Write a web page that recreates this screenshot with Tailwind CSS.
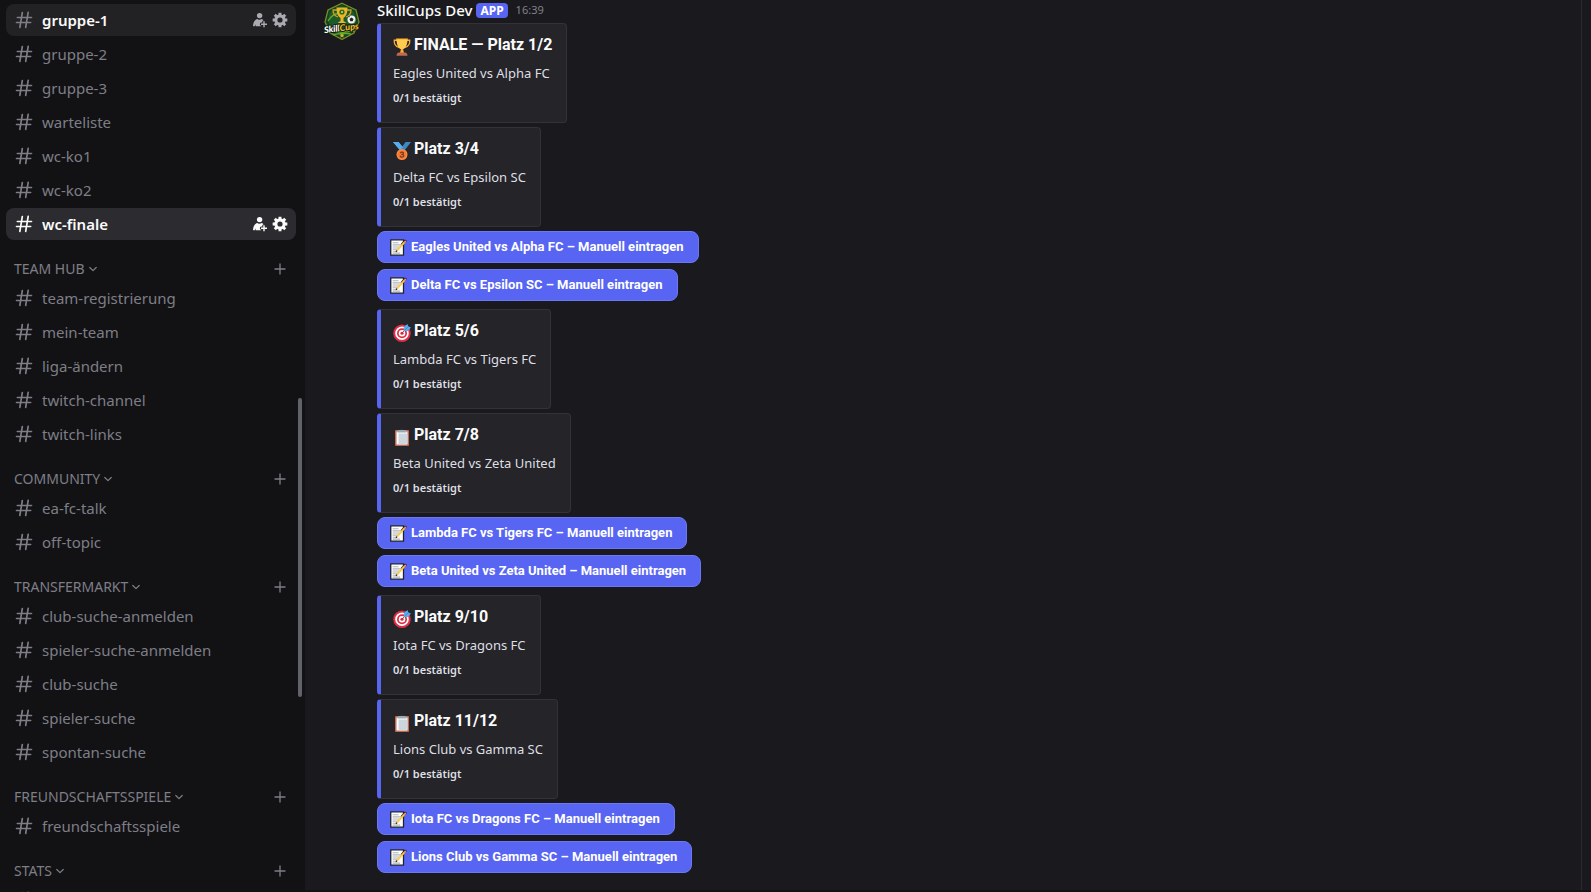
<!DOCTYPE html>
<html lang="de">
<head>
<meta charset="utf-8">
<meta name="viewport" content="width=device-width, initial-scale=1">
<title>wc-finale</title>
<script src="https://cdn.jsdelivr.net/npm/@tailwindcss/browser@4"></script>
</head>
<body class="h-screen overflow-hidden bg-[#1a1a1e] font-['Noto_Sans','Open_Sans',sans-serif] text-[#dfdfe3]">

<!-- Icon definitions -->
<svg class="hidden" aria-hidden="true">
  <symbol id="hash" viewBox="0 0 24 24"><path fill="currentColor" fill-rule="evenodd" d="M10.99 3.16A1 1 0 1 0 9 2.84L8.15 8H4a1 1 0 0 0 0 2h3.82l-.67 4H3a1 1 0 1 0 0 2h3.82l-.8 4.84a1 1 0 0 0 1.97.32L8.85 16h4.97l-.8 4.84a1 1 0 0 0 1.97.32l.86-5.16H20a1 1 0 1 0 0-2h-3.82l.67-4H21a1 1 0 1 0 0-2h-3.82l.8-4.84a1 1 0 1 0-1.97-.32L15.15 8h-4.97l.8-4.84ZM14.15 14l.67-4H9.85l-.67 4h4.97Z"/></symbol>
  <symbol id="invite" viewBox="0 0 16 16"><g fill="currentColor"><circle cx="7.6" cy="3.6" r="2.7"/><path d="M1 14.2c0-3.600 1.700-6.900 4.500-7.300.5 1 3.200 1 4.100 0 .9.200 1.500.600 2 1.300-.9.200-1.300.800-1.300 1.800v.5h-.5c-1.300 0-1.900.700-1.900 1.700 0 .9.500 1.400 1.300 1.600v.4H3.700l-.3-2-.6 2H1.600a.6.6 0 0 1-.6-.6Z"/><path d="M11.300 9.200h1.400v2.300H15v1.400h-2.300v2.300h-1.400v-2.300H9v-1.400h2.300z"/></g></symbol>
  <symbol id="gear" viewBox="0 0 24 24"><g fill="none" stroke="currentColor"><circle cx="12" cy="12" r="6.200" stroke-width="4.600"/><path stroke-width="4.400" stroke-linecap="butt" d="M12 5V1M12 19v4M5 12H1M19 12h4M7 7 4.200 4.200M17 17l2.800 2.800M17 7l2.800-2.800M7 17l-2.800 2.800"/></g></symbol>
  <symbol id="chevron" viewBox="0 0 12 12"><path fill="none" stroke="currentColor" stroke-width="1.200" stroke-linecap="round" stroke-linejoin="round" d="m2.800 4.500 3.200 3.200 3.200-3.200"/></symbol>
  <symbol id="plus" viewBox="0 0 18 18"><path fill="none" stroke="currentColor" stroke-width="1.300" stroke-linecap="round" d="M9 4v10M4 9h10"/></symbol>

  <symbol id="trophy" viewBox="0 0 36 36"><path fill="none" stroke="#FFAC33" stroke-width="2.600" d="M8 4.500H2.500C2 12 5 17 12 19M28 4.500h5.500C34 12 31 17 24 19"/><path fill="#FFCC4D" d="M7 2h22c0 11-3 18-9 20.500V27h-4v-4.500C10 20 7 13 7 2Z"/><path fill="#FFAC33" d="M16 22h4l2 8h-8z"/><path fill="#C1694F" d="M12 29h12c3 0 5 3 5 6.500H7C7 32 9 29 12 29Z"/><path fill="#FFAC33" d="M6 1h24v2H6z"/></symbol>
  <symbol id="medal" viewBox="0 0 36 36"><path fill="#55ACEE" d="M0 0h11l11 13-7 5z"/><path fill="#3B88C3" d="M25 0h11L23 17l-8-3z"/><path fill="#55ACEE" d="M0 0h11l9 11-6 5z"/><circle cx="18" cy="25" r="11" fill="#FF8A3B"/><circle cx="18" cy="25" r="8.500" fill="#F4783A"/><path fill="none" stroke="#7C3B1B" stroke-width="2.400" stroke-linecap="round" stroke-linejoin="round" d="M15 21.500c1-2 6-2 6 .7 0 2-2 2.500-3.500 2.500 2 0 4 .8 4 3 0 3-5.500 3.200-7 .5"/></symbol>
  <symbol id="target" viewBox="0 0 36 36"><circle cx="18" cy="18.500" r="17.500" fill="#DD2E44"/><circle cx="18" cy="18.500" r="13.500" fill="#fff"/><circle cx="18" cy="18.500" r="10" fill="#DD2E44"/><circle cx="18" cy="18.500" r="6.500" fill="#fff"/><circle cx="18" cy="18.500" r="3.200" fill="#DD2E44"/><path stroke="#8a3342" stroke-width="1.800" d="m18 18.500 9-10"/><path fill="#55ACEE" d="m22 14-.5-8L29 0l1.500 5L36 7l-6 7z"/><path stroke="#3B88C3" stroke-width="1.500" d="m23 13 9-9"/></symbol>
  <symbol id="clipboard" viewBox="0 0 36 36"><rect x="4" y="4" width="28" height="32" rx="2" fill="#C1694F"/><path fill="#fff" d="M7 7h22v26H7z"/><path fill="#CCD6DD" d="M11 11h18v18l-4 4H11z"/><path fill="#292F33" d="M14 3C15-.6 21-.6 22 3l1 2H13z"/><path fill="#99AAB5" d="M11 4h14c1.500 1 2 3 2 5H9c0-2 .5-4 2-5Z"/></symbol>
  <symbol id="memo" viewBox="0 0 16 16"><path fill="#fdfdfd" stroke="#20222b" stroke-width="1.200" d="M.7.8h12v14.400H.7z"/><path stroke="#b1b4bc" stroke-width="1" d="M2.500 3.500H8M2.500 5.500h8M2.500 7.500h6.500M2.500 9.500h5M2.500 11.500h4M2.500 13.300h7"/><path stroke="#20222b" stroke-width="2.200" stroke-linecap="round" d="m11.500 4.800 3-3"/><path stroke="#ffc847" stroke-width="1.700" d="m6.300 11.200 7.500-8.200"/><path stroke="#f08a6b" stroke-width="1.600" stroke-linecap="round" d="m13.900 2.900.5-.6"/><path stroke="#20222b" stroke-width="1.200" d="m5.600 12 .9-1"/></symbol>
</svg>

<div class="flex h-full">

  <aside class="flex w-[305px] shrink-0 justify-between overflow-hidden bg-[#121214] text-[#7e7e87]">
    <nav aria-label="Kanäle" class="flex w-[296px] flex-col pt-1 pl-[6px] text-[15px] leading-5 [&_li>a]:flex [&_li>a]:h-8 [&_li>a]:min-w-0 [&_li>a]:flex-1 [&_li>a]:items-center [&_li>a]:gap-2 [&_li>a]:pl-2 [&_li>a>svg]:size-5 [&_ul]:flex [&_ul]:flex-col [&_ul]:gap-[2px] [&_h2]:flex [&_h2]:h-6 [&_h2]:items-center [&_h2]:justify-between [&_h2]:pr-[7px] [&_h2]:pl-2 [&_h2]:text-sm [&_section]:flex [&_section]:flex-col [&_section]:gap-[1px] [&_section]:pt-[17px] [&_h2>button:first-child]:flex [&_h2>button:first-child]:items-center [&_h2>button:first-child]:gap-[2px] [&_h2_svg]:size-3 [&_h2>button:last-child>svg]:size-[18px]">
      <ul>
        <li class="flex items-center rounded-lg bg-[#222225] pr-2">
          <a href="#gruppe-1"><svg><use href="#hash"/></svg><span class="font-semibold text-[#fbfbfb]">gruppe-1</span></a>
          <span class="flex gap-1 text-[#aaaab1]">
            <button aria-label="Einladen"><svg class="size-4"><use href="#invite"/></svg></button>
            <button aria-label="Kanal bearbeiten"><svg class="size-4"><use href="#gear"/></svg></button>
          </span>
        </li>
        <li class="flex"><a href="#gruppe-2"><svg><use href="#hash"/></svg>gruppe-2</a></li>
        <li class="flex"><a href="#gruppe-3"><svg><use href="#hash"/></svg>gruppe-3</a></li>
        <li class="flex"><a href="#warteliste"><svg><use href="#hash"/></svg>warteliste</a></li>
        <li class="flex"><a href="#wc-ko1"><svg><use href="#hash"/></svg>wc-ko1</a></li>
        <li class="flex"><a href="#wc-ko2"><svg><use href="#hash"/></svg>wc-ko2</a></li>
        <li class="flex items-center rounded-lg bg-[#2c2c30] pr-2 text-[#fbfbfb]">
          <a href="#wc-finale" aria-current="page"><svg><use href="#hash"/></svg><span class="font-semibold">wc-finale</span></a>
          <span class="flex gap-1">
            <button aria-label="Einladen"><svg class="size-4"><use href="#invite"/></svg></button>
            <button aria-label="Kanal bearbeiten"><svg class="size-4"><use href="#gear"/></svg></button>
          </span>
        </li>
      </ul>

      <section>
        <h2><button>TEAM HUB<svg><use href="#chevron"/></svg></button><button aria-label="Kanal erstellen"><svg><use href="#plus"/></svg></button></h2>
        <ul>
          <li class="flex"><a href="#team-registrierung"><svg><use href="#hash"/></svg>team-registrierung</a></li>
          <li class="flex"><a href="#mein-team"><svg><use href="#hash"/></svg>mein-team</a></li>
          <li class="flex"><a href="#liga"><svg><use href="#hash"/></svg>liga-ändern</a></li>
          <li class="flex"><a href="#twitch-channel"><svg><use href="#hash"/></svg>twitch-channel</a></li>
          <li class="flex"><a href="#twitch-links"><svg><use href="#hash"/></svg>twitch-links</a></li>
        </ul>
      </section>

      <section>
        <h2><button>COMMUNITY<svg><use href="#chevron"/></svg></button><button aria-label="Kanal erstellen"><svg><use href="#plus"/></svg></button></h2>
        <ul>
          <li class="flex"><a href="#ea-fc-talk"><svg><use href="#hash"/></svg>ea-fc-talk</a></li>
          <li class="flex"><a href="#off-topic"><svg><use href="#hash"/></svg>off-topic</a></li>
        </ul>
      </section>

      <section>
        <h2><button>TRANSFERMARKT<svg><use href="#chevron"/></svg></button><button aria-label="Kanal erstellen"><svg><use href="#plus"/></svg></button></h2>
        <ul>
          <li class="flex"><a href="#club-suche-anmelden"><svg><use href="#hash"/></svg>club-suche-anmelden</a></li>
          <li class="flex"><a href="#spieler-suche-anmelden"><svg><use href="#hash"/></svg>spieler-suche-anmelden</a></li>
          <li class="flex"><a href="#club-suche"><svg><use href="#hash"/></svg>club-suche</a></li>
          <li class="flex"><a href="#spieler-suche"><svg><use href="#hash"/></svg>spieler-suche</a></li>
          <li class="flex"><a href="#spontan-suche"><svg><use href="#hash"/></svg>spontan-suche</a></li>
        </ul>
      </section>

      <section>
        <h2><button>FREUNDSCHAFTSSPIELE<svg><use href="#chevron"/></svg></button><button aria-label="Kanal erstellen"><svg><use href="#plus"/></svg></button></h2>
        <ul>
          <li class="flex"><a href="#freundschaftsspiele"><svg><use href="#hash"/></svg>freundschaftsspiele</a></li>
        </ul>
      </section>

      <section>
        <h2><button>STATS<svg><use href="#chevron"/></svg></button><button aria-label="Kanal erstellen"><svg><use href="#plus"/></svg></button></h2>
        <ul>
          <li class="flex"><a href="#stats" aria-label="Stats"><svg><use href="#hash"/></svg></a></li>
        </ul>
      </section>
    </nav>
    <!-- Scroll position -->
    <div class="flex w-[7px] flex-col pt-[398px]"><div class="h-[299px] w-1 rounded-full bg-[#62626b]"></div></div>
  </aside>

  <main class="flex min-w-0 flex-1 border-b-2 border-[#131316]">
    <article class="flex min-w-0 flex-1 items-start gap-4 border-r border-[#2a2a2f] pl-[18px]">
      <svg class="mt-[2px] size-[38px] shrink-0" viewBox="0 0 38 38" role="img" aria-label="SkillCups">
        <path fill="#14451f" stroke="#7c8f25" stroke-width="1.200" d="M19 1.200 33 8l3 12-5 11-12 6.500L7 31 2 20 5 8z"/>
        <path fill="#1d5a2a" d="M19 4 31 10l2 9-4 10-10 5-10-5-4-10 2-9z"/>
        <path fill="none" stroke="#5fae2e" stroke-width="1.300" d="M5 19c3-5 6-7 11-8M7 31c8-1 16-1 24-2M10 33c6-2 12-2 18-1"/>
        <path fill="none" stroke="#d19b1f" stroke-width="1.300" d="M14 8h-4c0 4 2 6 5 7M24 8h4c0 4-2 6-5 7"/>
        <path fill="#e8b52b" d="M13.500 5.500h11c0 6-1.500 9-4 10.500V19l3 2h-9l3-2v-3c-2.500-1.500-4-4.500-4-10.500Z"/>
        <circle cx="19" cy="10" r="2.600" fill="#2c6b1e"/><circle cx="19" cy="10" r="1" fill="#f4d34a"/>
        <circle cx="28.500" cy="17.500" r="4" fill="#f1f1f1"/><path fill="#222" d="m28.500 15.500 2 1.500-.8 2.200h-2.400l-.8-2.200zM25 14.500l2-.8-1 2zM31.500 19.500l.8-1.800-1.800 3z"/>
        <g transform="rotate(-7 19 27)" font-family="Lato, sans-serif" font-size="9" font-weight="900" font-style="italic" stroke="#12200f" stroke-width="2" paint-order="stroke"><text x="1" y="29" fill="#fff">Skill<tspan fill="#f0b92d">Cups</tspan></text></g>
        <path fill="#d6b12c" d="m19 31 .8 1.600 1.700.2-1.300 1.200.4 1.700-1.600-.9-1.600.9.4-1.700-1.300-1.200 1.700-.2z"/>
      </svg>

      <div class="flex min-w-0 flex-1 flex-col items-start">
        <header class="flex h-[23px] items-center gap-2 pb-[3px]">
          <h1 class="flex items-center gap-1 text-[15px] leading-[19px] font-medium text-[#fbfbfb]">SkillCups Dev <span class="rounded-sm bg-[#5865f2] px-1 text-xs leading-[15px] font-bold text-white">APP</span></h1>
          <time datetime="16:39" class="text-[11px] text-[#81818a]">16:39</time>
        </header>

        <div class="flex flex-col items-start gap-2 [&_section]:flex [&_section]:flex-col [&_section]:items-start [&_section]:gap-1 [&_article]:flex [&_article]:flex-col [&_article]:gap-2 [&_article]:rounded-sm [&_article]:border [&_article]:border-l-4 [&_article]:border-[#323237] [&_article]:border-l-[#5865f2] [&_article]:bg-[#242429] [&_article]:pt-[10px] [&_article]:pr-[14px] [&_article]:pb-4 [&_article]:pl-3 [&_h2]:flex [&_h2]:items-center [&_h2]:gap-[3px] [&_h2]:font-[Roboto,sans-serif] [&_h2]:text-base [&_h2]:leading-[22px] [&_h2]:font-bold [&_h2]:text-[#fbfbfb] [&_h2>svg]:mt-1 [&_h2>svg]:size-[18px] [&_p]:text-[13px] [&_p]:leading-[18px] [&_footer]:text-[11px] [&_footer]:leading-4 [&_footer]:font-semibold [&_button]:flex [&_button]:h-8 [&_button]:items-center [&_button]:gap-1 [&_button]:rounded-lg [&_button]:border [&_button]:border-[#6c77f3] [&_button]:bg-[#5865f2] [&_button]:pr-[14px] [&_button]:pl-3 [&_button]:font-[Roboto,sans-serif] [&_button]:text-[13px] [&_button]:font-bold [&_button]:text-white [&_button>svg]:size-[17px]">
          <section>
            <article><h2><svg><use href="#trophy"/></svg>FINALE — Platz 1/2</h2><p>Eagles United vs Alpha FC</p><footer>0/1 bestätigt</footer></article>
            <article><h2><svg><use href="#medal"/></svg>Platz 3/4</h2><p>Delta FC vs Epsilon SC</p><footer>0/1 bestätigt</footer></article>
            <div class="flex flex-col items-start gap-[6px]">
              <button><svg><use href="#memo"/></svg>Eagles United vs Alpha FC – Manuell eintragen</button>
              <button><svg><use href="#memo"/></svg>Delta FC vs Epsilon SC – Manuell eintragen</button>
            </div>
          </section>
          <section>
            <article><h2><svg><use href="#target"/></svg>Platz 5/6</h2><p>Lambda FC vs Tigers FC</p><footer>0/1 bestätigt</footer></article>
            <article><h2><svg><use href="#clipboard"/></svg>Platz 7/8</h2><p>Beta United vs Zeta United</p><footer>0/1 bestätigt</footer></article>
            <div class="flex flex-col items-start gap-[6px]">
              <button><svg><use href="#memo"/></svg>Lambda FC vs Tigers FC – Manuell eintragen</button>
              <button><svg><use href="#memo"/></svg>Beta United vs Zeta United – Manuell eintragen</button>
            </div>
          </section>
          <section>
            <article><h2><svg><use href="#target"/></svg>Platz 9/10</h2><p>Iota FC vs Dragons FC</p><footer>0/1 bestätigt</footer></article>
            <article><h2><svg><use href="#clipboard"/></svg>Platz 11/12</h2><p>Lions Club vs Gamma SC</p><footer>0/1 bestätigt</footer></article>
            <div class="flex flex-col items-start gap-[6px]">
              <button><svg><use href="#memo"/></svg>Iota FC vs Dragons FC – Manuell eintragen</button>
              <button><svg><use href="#memo"/></svg>Lions Club vs Gamma SC – Manuell eintragen</button>
            </div>
          </section>
        </div>
      </div>
    </article>
    <div class="w-[9px] shrink-0"></div>
  </main>
</div>
</body>
</html>
